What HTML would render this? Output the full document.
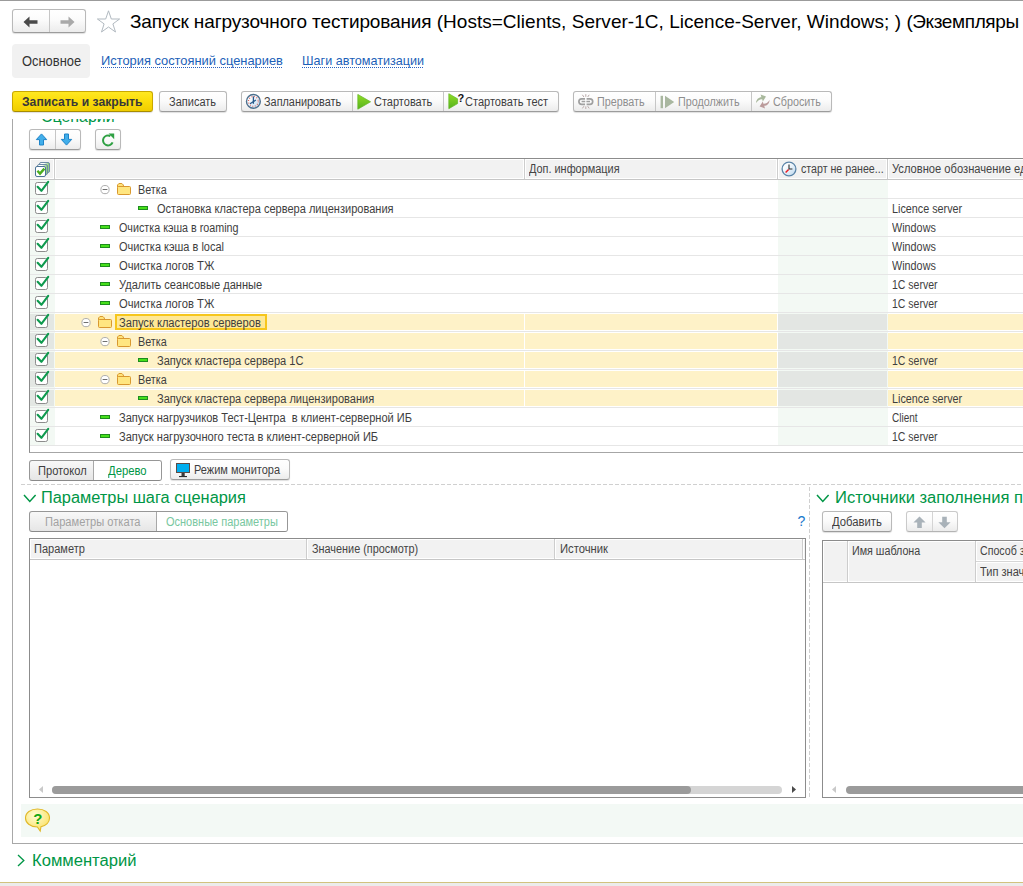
<!DOCTYPE html>
<html lang="ru"><head><meta charset="utf-8"><title>Запуск нагрузочного тестирования</title>
<style>
*{box-sizing:border-box;margin:0;padding:0}
html,body{width:1023px;height:886px;overflow:hidden;background:#fff}
body{position:relative;font-family:"Liberation Sans",sans-serif;font-size:12px;color:#3e3e3e}
.a{position:absolute;white-space:nowrap;transform-origin:0 50%}
.hd,.rt,.btn .t{transform:scaleX(.92);transform-origin:0 50%}
.btn{position:absolute;border:1px solid #b9b9b9;border-bottom-color:#9c9c9c;border-radius:3px;background:linear-gradient(#ffffff 0%,#fbfbfb 45%,#ececec 100%);box-shadow:0 1px 1px rgba(0,0,0,.13)}
.btn .t{position:absolute;top:1px;line-height:19px;white-space:nowrap}
.tg{border-color:#979797;border-bottom-color:#8a8a8a;box-shadow:none;background:linear-gradient(#f8f8f8,#e6e6e6)}
.tg .sep{background:#a8a8a8}
.sep{position:absolute;top:0;bottom:0;width:1px;background:#c6c6c6}
.dis{color:#8e8e8e}
.grn{color:#009646}
.hd{line-height:20px;color:#444}
.hc{top:1px;height:18px;background:#f2f2f2}
.hv{top:0;width:1px;height:20px;background:#cdcdcd}
.hl{left:0;top:20px;height:1px;background:#c6c6c6}
.rl{left:0;width:993px;height:1px;background:#e6e6e6}
.rt{line-height:18px;margin-top:1px}
.h16{font-size:16px;color:#009646;transform:scaleX(1.024)}
</style></head><body>
<!-- top line -->
<div class="a" style="left:0;top:0;width:1023px;height:1px;background:#9b9b9b"></div>

<!-- nav -->
<div class="btn" style="left:12px;top:9px;width:74px;height:24px">
 <div class="sep" style="left:36px"></div>
 <svg class="a" style="left:10.4px;top:5.5px" width="16" height="12" viewBox="0 0 16 12"><path d="M0.5 6 L6.5 0.5 V4.3 H14.5 V7.7 H6.5 V11.5 Z" fill="#4a4a4a"/></svg>
 <svg class="a" style="left:46.4px;top:5.5px" width="16" height="12" viewBox="0 0 16 12"><path d="M15.5 6 L9.5 0.5 V4.3 H1.5 V7.7 H9.5 V11.5 Z" fill="#a9a9a9"/></svg>
</div>
<svg class="a" style="left:96px;top:9px" width="26" height="25" viewBox="0 0 26 25"><path d="M12.5 1.8 L15.3 10 H23.6 L16.9 14.9 L19.5 23 L12.5 18 L5.5 23 L8.1 14.9 L1.4 10 H9.7 Z" fill="#fff" stroke="#adb5bd" stroke-width="0.95"/></svg>
<div class="a" id="title" style="left:130px;top:11px;font-size:19px;line-height:22px;color:#000"><span style="letter-spacing:-0.12px">Запуск нагрузочного тестирования </span><span style="letter-spacing:0.026px">(Hosts=Clients, Server-1C, Licence-Server, Windows; ) </span><span style="letter-spacing:-0.38px">(Экземпляры нагрузочного тестирования)</span></div>

<!-- tabs -->
<div class="a" style="left:12px;top:44px;width:78px;height:34px;background:#f1f1f1;border-radius:4px"></div>
<div class="a" id="tab1" style="left:22px;top:53px;font-size:14px;line-height:16px;color:#333;transform:scaleX(0.9217)">Основное</div>
<div class="a" id="tab2" style="left:101px;top:53px;font-size:13px;line-height:16px;color:#1c5fb8;transform:scaleX(0.9892)">История состояний сценариев</div>
<div class="a" id="tab3" style="left:302px;top:53px;font-size:13px;line-height:16px;color:#1c5fb8;transform:scaleX(0.9697)">Шаги автоматизации</div>

<div class="a" style="left:101px;top:67px;width:182px;height:1px;background:repeating-linear-gradient(to right,#2a62c0 0,#2a62c0 1px,transparent 1px,transparent 2px)"></div>
<div class="a" style="left:302px;top:67px;width:122px;height:1px;background:repeating-linear-gradient(to right,#2a62c0 0,#2a62c0 1px,transparent 1px,transparent 2px)"></div>
<!-- toolbar -->
<div class="btn" style="left:12px;top:91px;width:141px;height:21px;background:linear-gradient(#ffe822 0%,#fbdc0a 50%,#efcd00 100%);border-color:#c9a800;border-bottom-color:#a78c00">
 <div class="t" id="b1" style="left:9.3px;font-weight:bold;color:#383838;transform:scaleX(1.0135)">Записать и закрыть</div></div>
<div class="btn" style="left:159px;top:91px;width:68px;height:21px"><div class="t" id="b2" style="left:9.4px;transform:scaleX(0.9173)">Записать</div></div>

<div class="btn" style="left:241px;top:91px;width:318px;height:21px">
 <div class="sep" style="left:110px"></div><div class="sep" style="left:201px"></div>
 <svg class="a" style="left:3px;top:1px" width="17" height="17" viewBox="0 0 17 17"><circle cx="8.4" cy="8.4" r="6.9" fill="url(#cf)" stroke="#4d6f8d" stroke-width="1.4"/><circle cx="8.4" cy="8.4" r="4.9" fill="none" stroke="#e0584e" stroke-width="1.1" stroke-dasharray="0.9 1.666"/><path d="M8.4 3.4V10.8" stroke="#27588a" stroke-width="1.3"/><path d="M10.9 7L5 10.8" stroke="#27588a" stroke-width="1.2"/></svg>
 <div class="t" id="b3" style="left:22.3px;transform:scaleX(0.9069)">Запланировать</div>
 <svg class="a" style="left:115px;top:2px" width="15" height="16" viewBox="0 0 15 16"><defs><linearGradient id="pg" x1="0" y1="0" x2="0" y2="1"><stop offset="0" stop-color="#90dc24"/><stop offset="1" stop-color="#56b21e"/></linearGradient></defs><path d="M0.8 0.4 L13.6 7.8 L0.8 15.2 Z" fill="url(#pg)" stroke="#62b624" stroke-width=".7"/></svg>
 <div class="t" id="b4" style="left:132px;transform:scaleX(0.9165)">Стартовать</div>
 <svg class="a" style="left:206px;top:1.4px" width="17" height="17" viewBox="0 0 17 17"><path d="M0.8 0.7 L9.6 5.8 V10.6 L0.8 15.7 Z" fill="url(#pg)" stroke="#62b624" stroke-width=".7"/><text x="9.6" y="8.6" font-family="Liberation Sans" font-size="11" font-weight="bold" fill="#111">?</text></svg>
 <div class="t" id="b5" style="left:223px;transform:scaleX(0.9195)">Стартовать тест</div>
</div>

<div class="btn" style="left:573px;top:91px;width:259px;height:21px">
 <div class="sep" style="left:81px"></div><div class="sep" style="left:177px"></div>
 <svg class="a" style="left:4px;top:1px" width="16" height="18" viewBox="0 0 16 18"><g fill="none" stroke="#a0a0a0" stroke-width="1.7"><path d="M7 5.8H3.7a2.8 2.8 0 0 0 0 5.6H7"/><path d="M8.6 5.8H11.9a2.8 2.8 0 0 1 0 5.6H8.6"/><path d="M3.6 8.6H7.2M8.4 8.6H12" stroke-width="1.5"/></g><path d="M7.8 1.2V3.8M4.4 1.8L5.9 4M11.2 1.8L9.7 4M7.8 16V13.4M4.4 15.4L5.9 13.2M11.2 15.4L9.7 13.2" stroke="#b9aaaa" stroke-width="1"/></svg>
 <div class="t dis" id="b6" style="left:23px;transform:scaleX(0.8962)">Прервать</div>
 <svg class="a" style="left:86px;top:3px" width="15" height="14" viewBox="0 0 15 14"><rect x="0.6" y="0.8" width="2.4" height="12.4" fill="#a9b7a0"/><path d="M5 0.8 L14.2 7 L5 13.2 Z" fill="#a9b7a0"/></svg>
 <div class="t dis" id="b7" style="left:104px;transform:scaleX(0.897)">Продолжить</div>
 <svg class="a" style="left:181px;top:2px" width="17" height="17" viewBox="0 0 17 17"><path d="M1 9C1.2 5.4 3.6 3.2 6.4 3.2L5.6 0.6L11 2.6L7.8 7.4L7.2 5.2C4.8 5 3 6.2 1 9Z" fill="#a8b89c"/><path d="M14.6 6C14.4 9.6 12 11.8 9.2 11.8L10 14.4L4.6 12.4L7.8 7.6L8.4 9.8C10.8 10 12.6 8.8 14.6 6Z" fill="#bb9b9b"/></svg>
 <div class="t dis" id="b8" style="left:199px;transform:scaleX(0.8968)">Сбросить</div>
</div>

<!-- group box -->
<div class="a" style="left:12px;top:119px;width:1px;height:725px;background:#a8a8a8"></div>
<div class="a" style="left:12px;top:843px;width:1011px;height:1px;background:#a8a8a8"></div>

<!-- clipped section title -->
<div class="a" style="left:20px;top:119px;width:200px;height:9px;overflow:hidden">
 <svg class="a" style="left:4px;top:-10.2px" width="12" height="12" viewBox="0 0 12 12"><path d="M0.8 3.2 L6 9.6 L11.2 3.2" fill="none" stroke="#009646" stroke-width="1.5"/></svg>
 <div class="a h16" id="sec0" style="left:21.3px;top:-11.4px;line-height:18px;transform:scaleX(0.995)">Сценарий</div>
</div>
<!-- small toolbar -->
<div class="btn" style="left:29px;top:129px;width:52px;height:21px"><div class="sep" style="left:25px"></div>
 <svg class="a" style="left:5.2px;top:3.3px" width="13" height="13" viewBox="0 0 13 13"><path d="M6.5 0.9 L11.7 6.6 H8.5 V12 H4.5 V6.6 H1.3 Z" fill="#41aeea" stroke="#1f84c8" stroke-width="1"/></svg>
 <svg class="a" style="left:30.2px;top:3.3px" width="13" height="13" viewBox="0 0 13 13"><path d="M6.5 12.1 L11.7 6.4 H8.5 V1 H4.5 V6.4 H1.3 Z" fill="#41aeea" stroke="#1f84c8" stroke-width="1"/></svg>
</div>
<div class="btn" style="left:95px;top:129px;width:26px;height:21px">
 <svg class="a" style="left:5px;top:2.7px" width="15" height="14" viewBox="0 0 15 14"><path d="M11.6 9.4 A5 5 0 1 1 9.4 3" fill="none" stroke="#2ea043" stroke-width="2"/><path d="M7.6 0.6 H13.2 V6.2 Z" fill="#2ea043"/></svg>
</div>
<!-- tree table -->
<div class="a" id="tbl1" style="left:29px;top:158px;width:994px;height:295px;border:1px solid #8c8c8c;border-right:0;border-bottom-color:#a6a6a6;background:#fff;overflow:hidden">
 <div class="a hc" style="left:1px;width:22px"></div>
 <div class="a hc" style="left:26px;width:467px"></div>
 <div class="a hc" style="left:496px;width:250px"></div>
 <div class="a hc" style="left:749px;width:107px"></div>
 <div class="a hc" style="left:859px;width:134px"></div>
 <div class="a hv" style="left:24px"></div>
 <div class="a hv" style="left:494px"></div>
 <div class="a hv" style="left:747px"></div>
 <div class="a hv" style="left:857px"></div>
 <div class="a hl" style="width:993px"></div>
 <div class="a" style="left:0;top:21px;width:25px;height:266px;background:#f3f9f4"></div>
 <div class="a" style="left:748px;top:21px;width:110px;height:266px;background:#f3f9f4"></div>
 <svg class="a" style="left:4px;top:2px" width="18" height="17" viewBox="0 0 18 17"><defs><linearGradient id="gq" x1="0" x2="1"><stop offset="0.45" stop-color="#fff"/><stop offset="1" stop-color="#7cc46a"/></linearGradient></defs><rect x="5.5" y="1.5" width="10" height="10" rx="1.5" fill="url(#gq)" stroke="#6e8ca6"/><rect x="3.5" y="3.5" width="10" height="10" rx="1.5" fill="url(#gq)" stroke="#6e8ca6"/><rect x="1.5" y="5.5" width="10" height="10" rx="1.5" fill="#fff" stroke="#4b7396"/><path d="M3.4 9.8 L6 12.6 L10.4 7.6" fill="none" stroke="#4cae20" stroke-width="2.4"/></svg>
 <div class="a hd" style="left:499px;top:0;transform:scaleX(0.9085)">Доп. информация</div>
 <svg class="a" style="left:750.8px;top:1.9px" width="16" height="16" viewBox="0 0 16 16"><defs><linearGradient id="cf" x1="0" y1="0" x2="1" y2="1"><stop offset="0.3" stop-color="#fafcfe"/><stop offset="1" stop-color="#b9d6ee"/></linearGradient></defs><circle cx="8" cy="8" r="6.9" fill="url(#cf)" stroke="#5b84a8" stroke-width="1.3"/><path d="M8 3.6V8H11.4" fill="none" stroke="#2a2a2a" stroke-width="1.1"/><path d="M7.6 8.4L4.6 11.6" stroke="#e81c24" stroke-width="1.5"/></svg>
 <div class="a hd" style="left:771px;top:0;transform:scaleX(0.8864)">старт не ранее...</div>
 <div class="a hd" style="left:862px;top:0;transform:scaleX(0.93)">Условное обозначение единицы</div>
 <div class="a rl" style="top:39px"></div>
 <svg class="a" style="left:5px;top:21px" width="15" height="15" viewBox="0 0 15 15"><rect x="0.5" y="2.5" width="12" height="12" rx="1.8" fill="#fff" stroke="#8c8c8c"/><path d="M2.6 6.8 L6.4 10.8 L13.2 1.8" fill="none" stroke="#0e9a4e" stroke-width="2.1" stroke-linejoin="round" stroke-linecap="round"/></svg>
 <svg class="a" style="left:69.5px;top:26px" width="10" height="10" viewBox="0 0 10 10"><circle cx="5" cy="4.6" r="4.1" fill="#fff" stroke="#adadad" stroke-width="1"/><path d="M2.6 4.5H7.4" stroke="#707070" stroke-width="1"/></svg>
 <svg class="a" style="left:87px;top:24px" width="14" height="12" viewBox="0 0 14 12"><path d="M0.5 4V2L1.9 0.5H4.9L6.4 2V4Z" fill="#ffe37a" stroke="#d9982f"/><rect x="0.5" y="3.5" width="13" height="8" rx="1" fill="#ffe680" stroke="#d9982f"/></svg>
 <div class="a rt" style="left:108px;top:21px;transform:scaleX(0.899)">Ветка</div>
 <div class="a rl" style="top:58px"></div>
 <svg class="a" style="left:5px;top:40px" width="15" height="15" viewBox="0 0 15 15"><rect x="0.5" y="2.5" width="12" height="12" rx="1.8" fill="#fff" stroke="#8c8c8c"/><path d="M2.6 6.8 L6.4 10.8 L13.2 1.8" fill="none" stroke="#0e9a4e" stroke-width="2.1" stroke-linejoin="round" stroke-linecap="round"/></svg>
 <div class="a" style="left:108px;top:47px;width:10px;height:4px;background:#46e01a;border:1px solid #1e8c1e"></div>
 <div class="a rt" style="left:127px;top:40px;transform:scaleX(0.9192)">Остановка кластера сервера лицензирования</div>
 <div class="a rt" style="left:862px;top:40px;transform:scaleX(0.8987)">Licence server</div>
 <div class="a rl" style="top:77px"></div>
 <svg class="a" style="left:5px;top:59px" width="15" height="15" viewBox="0 0 15 15"><rect x="0.5" y="2.5" width="12" height="12" rx="1.8" fill="#fff" stroke="#8c8c8c"/><path d="M2.6 6.8 L6.4 10.8 L13.2 1.8" fill="none" stroke="#0e9a4e" stroke-width="2.1" stroke-linejoin="round" stroke-linecap="round"/></svg>
 <div class="a" style="left:70px;top:66px;width:10px;height:4px;background:#46e01a;border:1px solid #1e8c1e"></div>
 <div class="a rt" style="left:89px;top:59px;transform:scaleX(0.8953)">Очистка кэша в roaming</div>
 <div class="a rt" style="left:862px;top:59px;transform:scaleX(0.9004)">Windows</div>
 <div class="a rl" style="top:96px"></div>
 <svg class="a" style="left:5px;top:78px" width="15" height="15" viewBox="0 0 15 15"><rect x="0.5" y="2.5" width="12" height="12" rx="1.8" fill="#fff" stroke="#8c8c8c"/><path d="M2.6 6.8 L6.4 10.8 L13.2 1.8" fill="none" stroke="#0e9a4e" stroke-width="2.1" stroke-linejoin="round" stroke-linecap="round"/></svg>
 <div class="a" style="left:70px;top:85px;width:10px;height:4px;background:#46e01a;border:1px solid #1e8c1e"></div>
 <div class="a rt" style="left:89px;top:78px;transform:scaleX(0.9138)">Очистка кэша в local</div>
 <div class="a rt" style="left:862px;top:78px;transform:scaleX(0.9004)">Windows</div>
 <div class="a rl" style="top:115px"></div>
 <svg class="a" style="left:5px;top:97px" width="15" height="15" viewBox="0 0 15 15"><rect x="0.5" y="2.5" width="12" height="12" rx="1.8" fill="#fff" stroke="#8c8c8c"/><path d="M2.6 6.8 L6.4 10.8 L13.2 1.8" fill="none" stroke="#0e9a4e" stroke-width="2.1" stroke-linejoin="round" stroke-linecap="round"/></svg>
 <div class="a" style="left:70px;top:104px;width:10px;height:4px;background:#46e01a;border:1px solid #1e8c1e"></div>
 <div class="a rt" style="left:89px;top:97px;transform:scaleX(0.9322)">Очистка логов ТЖ</div>
 <div class="a rt" style="left:862px;top:97px;transform:scaleX(0.9004)">Windows</div>
 <div class="a rl" style="top:134px"></div>
 <svg class="a" style="left:5px;top:116px" width="15" height="15" viewBox="0 0 15 15"><rect x="0.5" y="2.5" width="12" height="12" rx="1.8" fill="#fff" stroke="#8c8c8c"/><path d="M2.6 6.8 L6.4 10.8 L13.2 1.8" fill="none" stroke="#0e9a4e" stroke-width="2.1" stroke-linejoin="round" stroke-linecap="round"/></svg>
 <div class="a" style="left:70px;top:123px;width:10px;height:4px;background:#46e01a;border:1px solid #1e8c1e"></div>
 <div class="a rt" style="left:89px;top:116px;transform:scaleX(0.9225)">Удалить сеансовые данные</div>
 <div class="a rt" style="left:862px;top:116px;transform:scaleX(0.8755)">1C server</div>
 <div class="a rl" style="top:153px"></div>
 <svg class="a" style="left:5px;top:135px" width="15" height="15" viewBox="0 0 15 15"><rect x="0.5" y="2.5" width="12" height="12" rx="1.8" fill="#fff" stroke="#8c8c8c"/><path d="M2.6 6.8 L6.4 10.8 L13.2 1.8" fill="none" stroke="#0e9a4e" stroke-width="2.1" stroke-linejoin="round" stroke-linecap="round"/></svg>
 <div class="a" style="left:70px;top:142px;width:10px;height:4px;background:#46e01a;border:1px solid #1e8c1e"></div>
 <div class="a rt" style="left:89px;top:135px;transform:scaleX(0.9322)">Очистка логов ТЖ</div>
 <div class="a rt" style="left:862px;top:135px;transform:scaleX(0.8755)">1C server</div>
 <div class="a" style="left:0px;top:155px;width:24px;height:16px;background:#e3e7e3"></div>
 <div class="a" style="left:25px;top:155px;width:469px;height:16px;background:#fef2c8"></div>
 <div class="a" style="left:495px;top:155px;width:252px;height:16px;background:#fef2c8"></div>
 <div class="a" style="left:748px;top:155px;width:109px;height:16px;background:#e3e6e3"></div>
 <div class="a" style="left:858px;top:155px;width:135px;height:16px;background:#fef2c8"></div>
 <div class="a rl" style="top:172px"></div>
 <svg class="a" style="left:5px;top:154px" width="15" height="15" viewBox="0 0 15 15"><rect x="0.5" y="2.5" width="12" height="12" rx="1.8" fill="#fff" stroke="#8c8c8c"/><path d="M2.6 6.8 L6.4 10.8 L13.2 1.8" fill="none" stroke="#0e9a4e" stroke-width="2.1" stroke-linejoin="round" stroke-linecap="round"/></svg>
 <svg class="a" style="left:50.5px;top:159px" width="10" height="10" viewBox="0 0 10 10"><circle cx="5" cy="4.6" r="4.1" fill="#fff" stroke="#adadad" stroke-width="1"/><path d="M2.6 4.5H7.4" stroke="#707070" stroke-width="1"/></svg>
 <svg class="a" style="left:68px;top:157px" width="14" height="12" viewBox="0 0 14 12"><path d="M0.5 4V2L1.9 0.5H4.9L6.4 2V4Z" fill="#ffe37a" stroke="#d9982f"/><rect x="0.5" y="3.5" width="13" height="8" rx="1" fill="#ffe680" stroke="#d9982f"/></svg>
 <div class="a" style="left:85px;top:155px;width:152px;height:16px;border:2px solid #f6c61c;background:#fee897"></div>
 <div class="a rt" style="left:89px;top:154px;transform:scaleX(0.927)">Запуск кластеров серверов</div>
 <div class="a" style="left:0px;top:174px;width:24px;height:16px;background:#e3e7e3"></div>
 <div class="a" style="left:25px;top:174px;width:469px;height:16px;background:#fef2c8"></div>
 <div class="a" style="left:495px;top:174px;width:252px;height:16px;background:#fef2c8"></div>
 <div class="a" style="left:748px;top:174px;width:109px;height:16px;background:#e3e6e3"></div>
 <div class="a" style="left:858px;top:174px;width:135px;height:16px;background:#fef2c8"></div>
 <div class="a rl" style="top:191px"></div>
 <svg class="a" style="left:5px;top:173px" width="15" height="15" viewBox="0 0 15 15"><rect x="0.5" y="2.5" width="12" height="12" rx="1.8" fill="#fff" stroke="#8c8c8c"/><path d="M2.6 6.8 L6.4 10.8 L13.2 1.8" fill="none" stroke="#0e9a4e" stroke-width="2.1" stroke-linejoin="round" stroke-linecap="round"/></svg>
 <svg class="a" style="left:69.5px;top:178px" width="10" height="10" viewBox="0 0 10 10"><circle cx="5" cy="4.6" r="4.1" fill="#fff" stroke="#adadad" stroke-width="1"/><path d="M2.6 4.5H7.4" stroke="#707070" stroke-width="1"/></svg>
 <svg class="a" style="left:87px;top:176px" width="14" height="12" viewBox="0 0 14 12"><path d="M0.5 4V2L1.9 0.5H4.9L6.4 2V4Z" fill="#ffe37a" stroke="#d9982f"/><rect x="0.5" y="3.5" width="13" height="8" rx="1" fill="#ffe680" stroke="#d9982f"/></svg>
 <div class="a rt" style="left:108px;top:173px;transform:scaleX(0.899)">Ветка</div>
 <div class="a" style="left:0px;top:193px;width:24px;height:16px;background:#e3e7e3"></div>
 <div class="a" style="left:25px;top:193px;width:469px;height:16px;background:#fef2c8"></div>
 <div class="a" style="left:495px;top:193px;width:252px;height:16px;background:#fef2c8"></div>
 <div class="a" style="left:748px;top:193px;width:109px;height:16px;background:#e3e6e3"></div>
 <div class="a" style="left:858px;top:193px;width:135px;height:16px;background:#fef2c8"></div>
 <div class="a rl" style="top:210px"></div>
 <svg class="a" style="left:5px;top:192px" width="15" height="15" viewBox="0 0 15 15"><rect x="0.5" y="2.5" width="12" height="12" rx="1.8" fill="#fff" stroke="#8c8c8c"/><path d="M2.6 6.8 L6.4 10.8 L13.2 1.8" fill="none" stroke="#0e9a4e" stroke-width="2.1" stroke-linejoin="round" stroke-linecap="round"/></svg>
 <div class="a" style="left:108px;top:199px;width:10px;height:4px;background:#46e01a;border:1px solid #1e8c1e"></div>
 <div class="a rt" style="left:127px;top:192px;transform:scaleX(0.9214)">Запуск кластера сервера 1С</div>
 <div class="a rt" style="left:862px;top:192px;transform:scaleX(0.8755)">1C server</div>
 <div class="a" style="left:0px;top:212px;width:24px;height:16px;background:#e3e7e3"></div>
 <div class="a" style="left:25px;top:212px;width:469px;height:16px;background:#fef2c8"></div>
 <div class="a" style="left:495px;top:212px;width:252px;height:16px;background:#fef2c8"></div>
 <div class="a" style="left:748px;top:212px;width:109px;height:16px;background:#e3e6e3"></div>
 <div class="a" style="left:858px;top:212px;width:135px;height:16px;background:#fef2c8"></div>
 <div class="a rl" style="top:229px"></div>
 <svg class="a" style="left:5px;top:211px" width="15" height="15" viewBox="0 0 15 15"><rect x="0.5" y="2.5" width="12" height="12" rx="1.8" fill="#fff" stroke="#8c8c8c"/><path d="M2.6 6.8 L6.4 10.8 L13.2 1.8" fill="none" stroke="#0e9a4e" stroke-width="2.1" stroke-linejoin="round" stroke-linecap="round"/></svg>
 <svg class="a" style="left:69.5px;top:216px" width="10" height="10" viewBox="0 0 10 10"><circle cx="5" cy="4.6" r="4.1" fill="#fff" stroke="#adadad" stroke-width="1"/><path d="M2.6 4.5H7.4" stroke="#707070" stroke-width="1"/></svg>
 <svg class="a" style="left:87px;top:214px" width="14" height="12" viewBox="0 0 14 12"><path d="M0.5 4V2L1.9 0.5H4.9L6.4 2V4Z" fill="#ffe37a" stroke="#d9982f"/><rect x="0.5" y="3.5" width="13" height="8" rx="1" fill="#ffe680" stroke="#d9982f"/></svg>
 <div class="a rt" style="left:108px;top:211px;transform:scaleX(0.899)">Ветка</div>
 <div class="a" style="left:0px;top:231px;width:24px;height:16px;background:#e3e7e3"></div>
 <div class="a" style="left:25px;top:231px;width:469px;height:16px;background:#fef2c8"></div>
 <div class="a" style="left:495px;top:231px;width:252px;height:16px;background:#fef2c8"></div>
 <div class="a" style="left:748px;top:231px;width:109px;height:16px;background:#e3e6e3"></div>
 <div class="a" style="left:858px;top:231px;width:135px;height:16px;background:#fef2c8"></div>
 <div class="a rl" style="top:248px"></div>
 <svg class="a" style="left:5px;top:230px" width="15" height="15" viewBox="0 0 15 15"><rect x="0.5" y="2.5" width="12" height="12" rx="1.8" fill="#fff" stroke="#8c8c8c"/><path d="M2.6 6.8 L6.4 10.8 L13.2 1.8" fill="none" stroke="#0e9a4e" stroke-width="2.1" stroke-linejoin="round" stroke-linecap="round"/></svg>
 <div class="a" style="left:108px;top:237px;width:10px;height:4px;background:#46e01a;border:1px solid #1e8c1e"></div>
 <div class="a rt" style="left:127px;top:230px;transform:scaleX(0.9219)">Запуск кластера сервера лицензирования</div>
 <div class="a rt" style="left:862px;top:230px;transform:scaleX(0.8987)">Licence server</div>
 <div class="a rl" style="top:267px"></div>
 <svg class="a" style="left:5px;top:249px" width="15" height="15" viewBox="0 0 15 15"><rect x="0.5" y="2.5" width="12" height="12" rx="1.8" fill="#fff" stroke="#8c8c8c"/><path d="M2.6 6.8 L6.4 10.8 L13.2 1.8" fill="none" stroke="#0e9a4e" stroke-width="2.1" stroke-linejoin="round" stroke-linecap="round"/></svg>
 <div class="a" style="left:70px;top:256px;width:10px;height:4px;background:#46e01a;border:1px solid #1e8c1e"></div>
 <div class="a rt" style="left:89px;top:249px;transform:scaleX(0.9221);white-space:pre">Запуск нагрузчиков Тест-Центра  в клиент-серверной ИБ</div>
 <div class="a rt" style="left:862px;top:249px;transform:scaleX(0.8323)">Client</div>
 <div class="a rl" style="top:286px"></div>
 <svg class="a" style="left:5px;top:268px" width="15" height="15" viewBox="0 0 15 15"><rect x="0.5" y="2.5" width="12" height="12" rx="1.8" fill="#fff" stroke="#8c8c8c"/><path d="M2.6 6.8 L6.4 10.8 L13.2 1.8" fill="none" stroke="#0e9a4e" stroke-width="2.1" stroke-linejoin="round" stroke-linecap="round"/></svg>
 <div class="a" style="left:70px;top:275px;width:10px;height:4px;background:#46e01a;border:1px solid #1e8c1e"></div>
 <div class="a rt" style="left:89px;top:268px;transform:scaleX(0.9245)">Запуск нагрузочного теста в клиент-серверной ИБ</div>
 <div class="a rt" style="left:862px;top:268px;transform:scaleX(0.8755)">1C server</div>
</div>
<!-- view toggle -->
<div class="btn tg" style="left:29px;top:460px;width:133px;height:21px;overflow:hidden">
 <div class="a" style="left:63px;top:0;width:68px;height:19px;background:#fff"></div>
 <div class="sep" style="left:63px"></div>
 <div class="t" id="c1" style="left:7.5px;transform:scaleX(0.9256)">Протокол</div>
 <div class="t grn" id="c2" style="left:78px;transform:scaleX(0.9386)">Дерево</div>
</div>
<div class="btn" style="left:170px;top:459px;width:120px;height:21px">
 <svg class="a" style="left:5px;top:3px" width="14" height="15" viewBox="0 0 14 15"><rect x="0.5" y="0.5" width="13" height="9" fill="#00aeef" stroke="#5b4b46"/><rect x="5.5" y="10" width="3.2" height="3" fill="#3a3a3a"/><rect x="3" y="13" width="8" height="1.1" fill="#2e2e2e"/></svg>
 <div class="t" id="c3" style="left:22.5px;transform:scaleX(0.9156)">Режим монитора</div>
</div>
<!-- dashed separators -->
<div class="a" style="left:21px;top:484px;width:1002px;height:1px;background:repeating-linear-gradient(to right,#d0d0d0 0,#d0d0d0 4px,transparent 4px,transparent 6px)"></div>
<div class="a" style="left:809px;top:487px;width:1px;height:310px;background:repeating-linear-gradient(to bottom,#d0d0d0 0,#d0d0d0 4px,transparent 4px,transparent 6px)"></div>

<!-- section: step params -->
<svg class="a" style="left:23px;top:492px" width="14" height="12" viewBox="0 0 14 12"><path d="M1 3 L6.8 9.4 L12.6 3" fill="none" stroke="#009646" stroke-width="1.5"/></svg>
<div class="a h16" id="s1" style="left:41px;top:489px;line-height:18px;transform:scaleX(1.0219)">Параметры шага сценария</div>
<div class="btn tg" style="left:29px;top:511px;width:259px;height:21px;overflow:hidden">
 <div class="a" style="left:126px;top:0;width:131px;height:19px;background:#fff"></div>
 <div class="sep" style="left:126px"></div>
 <div class="t" id="c4" style="left:15px;color:#a2a2a2;transform:scaleX(0.926)">Параметры отката</div>
 <div class="t" id="c5" style="left:136px;color:#78c7a0;transform:scaleX(0.9159)">Основные параметры</div>
</div>
<div class="a" style="left:797.5px;top:513px;font-size:14px;line-height:16px;color:#1677cc">?</div>

<!-- params table -->
<div class="a" style="left:29px;top:538px;width:777px;height:260px;border:1px solid #8c8c8c;background:#fff;overflow:hidden">
 <div class="a hc" style="left:1px;width:275px"></div><div class="a hc" style="left:278px;width:246px"></div><div class="a hc" style="left:526px;width:246px"></div><div class="a hc" style="left:774px;width:1px"></div>
 <div class="a hv" style="left:276px"></div><div class="a hv" style="left:524px"></div><div class="a hv" style="left:772px"></div>
 <div class="a hl" style="width:775px"></div>
 <div class="a hd" style="left:4px;top:0;transform:scaleX(0.9186)">Параметр</div>
 <div class="a hd" style="left:282px;top:0;transform:scaleX(0.9055)">Значение (просмотр)</div>
 <div class="a hd" style="left:530px;top:0;transform:scaleX(0.9377)">Источник</div>
 <!-- scrollbar -->
 <svg class="a" style="left:8px;top:246px" width="6" height="9" viewBox="0 0 6 9"><path d="M5 1 L1 4.5 L5 8 Z" fill="#c9c9c9"/></svg>
 <div class="a" style="left:22px;top:247px;width:730px;height:8px;border-radius:4px;background:#d5d5d5"></div>
 <div class="a" style="left:22px;top:247px;width:639px;height:8px;border-radius:4px;background:#9b9b9b"></div>
 <svg class="a" style="left:761px;top:246px" width="6" height="9" viewBox="0 0 6 9"><path d="M1 1 L5 4.5 L1 8 Z" fill="#4a4a4a"/></svg>
</div>

<!-- section: fill sources -->
<svg class="a" style="left:816px;top:492px" width="14" height="12" viewBox="0 0 14 12"><path d="M1 3 L6.8 9.4 L12.6 3" fill="none" stroke="#009646" stroke-width="1.5"/></svg>
<div class="a h16" id="s2" style="left:834.5px;top:489px;line-height:18px;transform:scaleX(1.034)">Источники заполнения параметров</div>
<div class="btn" style="left:822px;top:511px;width:70px;height:21px"><div class="t" id="c6" style="left:9px;transform:scaleX(0.9414)">Добавить</div></div>
<div class="btn" style="left:906px;top:511px;width:52px;height:21px;border-color:#cacaca;border-bottom-color:#b4b4b4;box-shadow:0 1px 1px rgba(0,0,0,.07)"><div class="sep" style="left:25px;background:#d4d4d4"></div>
 <svg class="a" style="left:5.6px;top:3.6px" width="13" height="13" viewBox="0 0 13 13"><path d="M6.5 0.6 L12.6 6.6 H8.8 V12 H4.2 V6.6 H0.4 Z" fill="#a9b2b9"/></svg>
 <svg class="a" style="left:31px;top:3.6px" width="13" height="13" viewBox="0 0 13 13"><path d="M6.5 12.2 L12.6 6.2 H8.8 V0.8 H4.2 V6.2 H0.4 Z" fill="#a9b2b9"/></svg>
</div>
<div class="a" style="left:822px;top:540px;width:201px;height:258px;border:1px solid #8c8c8c;border-right:0;background:#fff;overflow:hidden">
 <div class="a hc" style="left:1px;width:23px;height:39px"></div><div class="a hc" style="left:26px;width:126px;height:39px"></div><div class="a hc" style="left:154px;width:46px;height:18px"></div><div class="a hc" style="left:154px;top:22px;width:46px;height:18px"></div>
 <div class="a hv" style="left:24px;height:41px"></div><div class="a hv" style="left:152px;height:41px"></div>
 <div class="a" style="left:153px;top:20px;width:47px;height:1px;background:#d6d6d6"></div>
 <div class="a hl" style="top:41px;width:200px"></div>
 <div class="a hd" style="left:29px;top:0;transform:scaleX(0.8926)">Имя шаблона</div>
 <div class="a hd" style="left:157px;top:0;transform:scaleX(0.885)">Способ заполнения</div>
 <div class="a hd" style="left:157px;top:21px;transform:scaleX(0.92)">Тип значения</div>
 <svg class="a" style="left:8px;top:244px" width="6" height="9" viewBox="0 0 6 9"><path d="M5 1 L1 4.5 L5 8 Z" fill="#c9c9c9"/></svg>
 <div class="a" style="left:23px;top:245px;width:190px;height:8px;border-radius:4px;background:#9b9b9b"></div>
</div>

<!-- hint band -->
<div class="a" style="left:21px;top:804px;width:1002px;height:33px;background:#f3f9f5"></div>
<svg class="a" style="left:24px;top:807.8px" width="28" height="27" viewBox="0 0 28 27">
 <defs><radialGradient id="yb" cx="0.4" cy="0.3" r="0.75"><stop offset="0" stop-color="#fffcd6"/><stop offset="1" stop-color="#fae060"/></radialGradient></defs>
 <path d="M13.5 1 C20.5 1 25.5 4.8 25.5 10 C25.5 14.4 22 17.8 17 18.7 L16.2 23 L13.4 19 C6 18.8 1.5 14.8 1.5 10 C1.5 4.8 6.5 1 13.5 1 Z" fill="url(#yb)" stroke="#e0b828" stroke-width="1.1"/>
 <text x="9.2" y="15.6" font-family="Liberation Sans" font-size="15" font-weight="bold" fill="#14a814">?</text>
</svg>

<!-- comment -->
<svg class="a" style="left:16px;top:853px" width="11" height="15" viewBox="0 0 11 15"><path d="M2 2.1 L7.8 7.5 L2 12.9" fill="none" stroke="#009646" stroke-width="1.35"/></svg>
<div class="a h16" id="s3" style="left:32px;top:852px;line-height:18px;transform:scaleX(1.0361)">Комментарий</div>
<div class="a" style="left:0;top:882px;width:1023px;height:1px;background:#d2c27e"></div>
<div class="a" style="left:0;top:883px;width:1023px;height:3px;background:#ececec"></div>

</body></html>
